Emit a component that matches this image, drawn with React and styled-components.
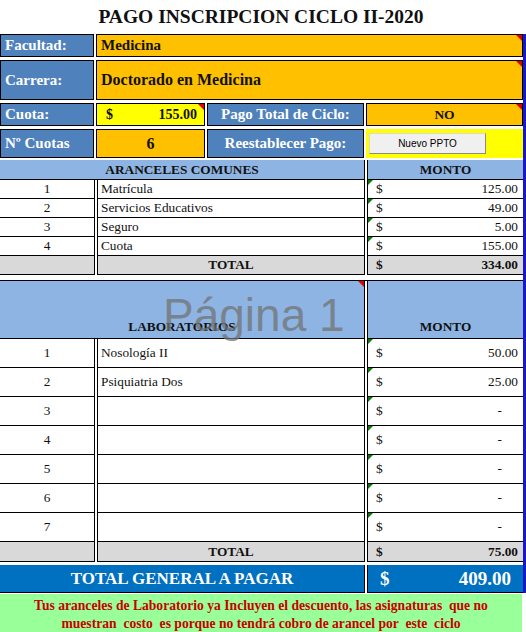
import styled, { createGlobalStyle } from 'styled-components';

const GlobalStyle = createGlobalStyle`
  body {
    margin: 0;
    background: #ffffff;
  }
`;

const Sheet = styled.div`
  position: relative;
  width: 526px;
  height: 632px;
  overflow: hidden;
  font-family: 'Liberation Serif', 'Times New Roman', serif;
  color: #111;
`;

const Title = styled.h1`
  margin: 0;
  height: 34px;
  display: flex;
  align-items: center;
  justify-content: center;
  font-size: 19.5px;
  font-weight: bold;
  padding-right: 4px;
`;

const Framed = styled.div`
  width: 523px;
  border-right: 3px solid #1818c4;
`;

const Form = styled.div`
  display: grid;
  grid-template-columns: 94px 109px 157px 1fr;
  grid-template-rows: 23px 40px 23px 29px;
  column-gap: 2px;
  row-gap: 3px;
`;

const FormCell = styled.div`
  position: relative;
  box-sizing: border-box;
  display: flex;
  align-items: center;
  justify-content: ${p => p.$justify || 'flex-start'};
  grid-column: ${p => p.$span || 'auto'};
  padding: ${p => p.$pad || '0 4px'};
  background: ${p => p.$bg};
  color: ${p => p.$color || '#111'};
  border: ${p => (p.$plain ? 'none' : '1px solid #000')};
  font-size: ${p => p.$size || 15}px;
  font-weight: bold;
  white-space: nowrap;

  ${p =>
    p.$note &&
    `&::after {
      content: '';
      position: absolute;
      top: 0;
      right: 0;
      border-top: 6px solid #e00000;
      border-left: 6px solid transparent;
    }`}
`;

const Button = styled.button`
  width: 117px;
  height: 21px;
  margin-left: 1px;
  background: #f0f0f0;
  border: 1px solid #d8d8d8;
  border-right-color: #8a8a8a;
  border-bottom-color: #8a8a8a;
  font-family: 'Liberation Sans', Arial, sans-serif;
  font-size: 10px;
  color: #000;
  padding: 0;
`;

const Section = styled.div`
  margin-top: ${p => p.$top || 0}px;
  border-top: ${p => (p.$rule ? '1px solid #000' : 'none')};
`;

const Row = styled.div`
  display: grid;
  grid-template-columns: ${p => (p.$wide ? '1fr 156px' : '95px 1fr 156px')};
  column-gap: 2px;
  height: ${p => p.$h}px;
`;

const Cell = styled.div`
  position: relative;
  box-sizing: border-box;
  display: flex;
  align-items: ${p => p.$valign || 'center'};
  justify-content: ${p => p.$justify || 'flex-start'};
  grid-column: ${p => p.$span || 'auto'};
  padding: ${p => p.$pad || '0 3px'};
  background: ${p => p.$bg || '#fff'};
  color: ${p => p.$color || '#111'};
  border-bottom: 1px solid #000;
  border-left: ${p => (p.$first ? 'none' : '1px solid #000')};
  border-right: ${p => (p.$last ? 'none' : '1px solid #000')};
  font-size: ${p => p.$size || 13.3}px;
  font-weight: ${p => (p.$bold ? 'bold' : 'normal')};
  white-space: nowrap;

  ${p =>
    p.$mark &&
    `&::before {
      content: '';
      position: absolute;
      top: 0;
      left: 0;
      border-top: 5px solid #0a7a0a;
      border-right: 5px solid transparent;
    }`}

  ${p =>
    p.$note &&
    `&::after {
      content: '';
      position: absolute;
      top: 0;
      right: 0;
      border-top: 6px solid #e00000;
      border-left: 6px solid transparent;
    }`}
`;

const Dash = styled.span`
  margin-right: 16px;
`;

const Note = styled.div`
  box-sizing: border-box;
  width: 522px;
  height: 42px;
  margin-top: 1px;
  padding-top: 3px;
  background: #99ff99;
  color: #c80000;
  font-size: 13.6px;
  font-weight: bold;
  line-height: 18px;
  text-align: center;
  white-space: pre;
`;

const Watermark = styled.div`
  position: absolute;
  left: 163px;
  top: 292px;
  font-family: 'Liberation Sans', Arial, sans-serif;
  font-size: 46px;
  line-height: 1;
  color: rgba(115, 115, 115, 0.75);
  pointer-events: none;
`;

const BLUE = '#4f81bd';
const ORANGE = '#ffc000';
const YELLOW = '#ffff00';
const HEAD = '#8db4e2';
const GRAY = '#d9d9d9';

const comunes = [
  { n: 1, name: 'Matrícula', monto: '125.00' },
  { n: 2, name: 'Servicios Educativos', monto: '49.00' },
  { n: 3, name: 'Seguro', monto: '5.00' },
  { n: 4, name: 'Cuota', monto: '155.00' },
];

const labs = [
  { n: 1, name: 'Nosología II', monto: '50.00' },
  { n: 2, name: 'Psiquiatria Dos', monto: '25.00' },
  { n: 3, name: '', monto: null },
  { n: 4, name: '', monto: null },
  { n: 5, name: '', monto: null },
  { n: 6, name: '', monto: null },
  { n: 7, name: '', monto: null },
];

const Amount = ({ value, bold, mark, size }) => (
  <Cell $last $mark={mark} $bold={bold} $size={size} $justify="space-between" $pad="0 5px 0 8px">
    <span>$</span>
    {value ? <span>{value}</span> : <Dash>-</Dash>}
  </Cell>
);

const ItemRow = ({ item, h }) => (
  <Row $h={h}>
    <Cell $first $justify="center">{item.n}</Cell>
    <Cell>{item.name}</Cell>
    <Amount value={item.monto} mark />
  </Row>
);

const TotalRow = ({ value, h }) => (
  <Row $h={h}>
    <Cell $first $bg={GRAY} />
    <Cell $bg={GRAY} $bold $justify="center">TOTAL</Cell>
    <Cell $last $bg={GRAY} $bold $justify="space-between" $pad="0 5px 0 8px">
      <span>$</span>
      <span>{value}</span>
    </Cell>
  </Row>
);

export default function App() {
  return (
    <Sheet>
      <GlobalStyle />
      <Title>PAGO INSCRIPCION CICLO II-2020</Title>
      <Framed>
        <Form>
          <FormCell $bg={BLUE} $color="#fff">Facultad:</FormCell>
          <FormCell $bg={ORANGE} $span="2 / 5" $note>Medicina</FormCell>

          <FormCell $bg={BLUE} $color="#fff">Carrera:</FormCell>
          <FormCell $bg={ORANGE} $span="2 / 5" $size={16} $note>Doctorado en Medicina</FormCell>

          <FormCell $bg={BLUE} $color="#fff">Cuota:</FormCell>
          <FormCell $bg={YELLOW} $justify="space-between" $pad="0 7px 0 9px" $size={14} $note>
            <span>$</span>
            <span>155.00</span>
          </FormCell>
          <FormCell $bg={BLUE} $color="#fff" $justify="center">Pago Total de Ciclo:</FormCell>
          <FormCell $bg={ORANGE} $justify="center" $size={13.5} $note>NO</FormCell>

          <FormCell $bg={BLUE} $color="#fff">Nº Cuotas</FormCell>
          <FormCell $bg={ORANGE} $justify="center" $size={16}>6</FormCell>
          <FormCell $bg={BLUE} $color="#fff" $justify="center">Reestablecer Pago:</FormCell>
          <FormCell $bg={YELLOW} $plain $pad="0 0 0 2px">
            <Button>Nuevo PPTO</Button>
          </FormCell>
        </Form>

        <Section $top={2}>
          <Row $h={20}>
            <Cell $first $span="1 / 3" $bg={HEAD} $bold $justify="center">ARANCELES COMUNES</Cell>
            <Cell $last $bg={HEAD} $bold $justify="center">MONTO</Cell>
          </Row>
          {comunes.map(item => (
            <ItemRow key={item.n} item={item} h={19} />
          ))}
          <TotalRow value="334.00" h={19} />
        </Section>

        <Section $top={5} $rule>
          <Row $h={58}>
            <Cell $first $span="1 / 3" $bg={HEAD} $bold $justify="center" $valign="flex-end" $pad="0 0 3px" $note>
              LABORATORIOS
            </Cell>
            <Cell $last $bg={HEAD} $bold $justify="center" $valign="flex-end" $pad="0 0 3px">
              MONTO
            </Cell>
          </Row>
          {labs.map(item => (
            <ItemRow key={item.n} item={item} h={29} />
          ))}
          <TotalRow value="75.00" h={20} />
        </Section>

        <Section $top={3}>
          <Row $wide $h={28}>
            <Cell $first $bg="#0070c0" $color="#fff" $bold $size={17} $justify="center">
              TOTAL GENERAL A PAGAR
            </Cell>
            <Cell $last $bg="#0070c0" $color="#fff" $bold $size={19} $justify="space-between" $pad="0 12px 0 12px">
              <span>$</span>
              <span>409.00</span>
            </Cell>
          </Row>
        </Section>
      </Framed>

      <Note>
        {'Tus aranceles de Laboratorio ya Incluyen el descuento, las asignaturas  que no\nmuestran  costo  es porque no tendrá cobro de arancel por  este  ciclo'}
      </Note>

      <Watermark>Página 1</Watermark>
    </Sheet>
  );
}
